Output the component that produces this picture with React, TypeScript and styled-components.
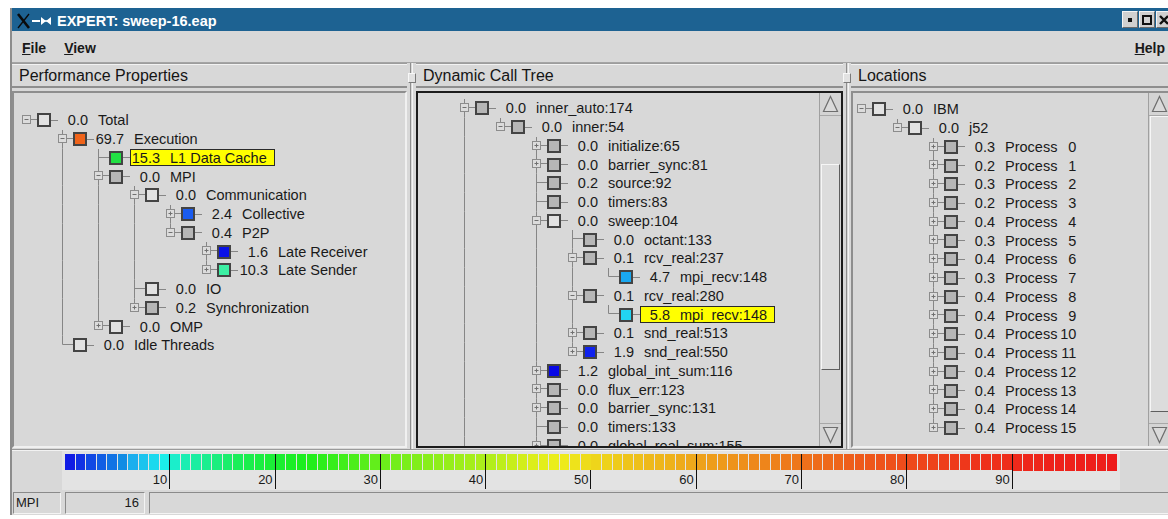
import React from 'react'
import styled, { createGlobalStyle } from 'styled-components'

const ROW = 18.75
const INDENT = 36
const LIGHT = '#e2e2e2'
const GRAY = '#b6b6b6'

const GlobalStyle = createGlobalStyle`
  html, body {
    margin: 0;
    padding: 0;
    background: #ffffff;
  }
  body {
    font-family: "Liberation Sans", Arial, sans-serif;
  }
`

const Page = styled.div`
  width: 1168px;
  height: 519px;
  overflow: hidden;
  box-sizing: border-box;
  padding: 8px 0 0 10px;
`

const Window = styled.div`
  width: 1160px;
  display: flex;
  flex-direction: column;
  background: #d8d8d8;
  border-left: 2px solid #8c8c8c;
  color: #1a1a1a;
`

const TitleBar = styled.div`
  height: 23px;
  display: flex;
  align-items: center;
  background: #1d6292;
  color: #ffffff;
  font-weight: bold;
  font-size: 14.5px;
  span {
    margin: 2px 0 0 3px;
    flex: 1;
  }
`

const WinButtons = styled.div`
  display: flex;
  gap: 1px;
`

const WinButton = styled.div`
  width: 16px;
  height: 17px;
  box-sizing: border-box;
  background: #d0d0d0;
  border: 1px solid;
  border-color: #f4f4f4 #6a6a6a #6a6a6a #f4f4f4;
  display: flex;
  align-items: center;
  justify-content: center;
`

const MenuBar = styled.div`
  height: 32px;
  display: flex;
  align-items: center;
  padding: 2px 7px 0 10px;
  box-sizing: border-box;
  font-size: 14px;
  font-weight: bold;
  border-bottom: 1px solid #a4a4a4;
  span {
    margin-right: 18px;
  }
  span:last-child {
    margin: 0 0 0 auto;
  }
`

const Panes = styled.div`
  height: 386px;
  display: flex;
`

const Pane = styled.div<{ $width?: number }>`
  display: flex;
  flex-direction: column;
  ${p => (p.$width ? `width: ${p.$width}px;` : 'flex: 1;')}
  min-width: 0;
`

const PaneHeader = styled.div`
  height: 25px;
  box-sizing: border-box;
  display: flex;
  align-items: center;
  padding: 2px 0 0 7px;
  font-size: 16px;
  color: #151515;
  border-top: 1px solid #9c9c9c;
  border-bottom: 2px solid #8e8e8e;
  box-shadow: inset 0 1px #f2f2f2;
`

const PaneBody = styled.div<{ $focus?: boolean }>`
  flex: 1;
  margin: 3px 0 1px;
  display: flex;
  min-height: 0;
  overflow: hidden;
  border: 2px solid;
  border-color: ${p =>
    p.$focus ? '#1c1c1c' : '#8e8e8e #f0f0f0 #f0f0f0 #8e8e8e'};
`

const Splitter = styled.div<{ $width: number }>`
  width: ${p => p.$width}px;
  display: flex;
  flex-direction: column;
  align-items: center;
  flex: none;
`

const SashLine = styled.div<{ $grow?: boolean }>`
  width: 1px;
  border-left: 1px solid #8e8e8e;
  border-right: 1px solid #f4f4f4;
  ${p => (p.$grow ? 'flex: 1;' : 'height: 10px;')}
`

const Sash = styled.div`
  width: 8px;
  height: 10px;
  box-sizing: border-box;
  background: #e2e2e2;
  border: 1px solid;
  border-color: #f8f8f8 #7a7a7a #7a7a7a #f8f8f8;
`

const TreeList = styled.div<{ $top: number }>`
  flex: 1;
  min-width: 0;
  overflow: hidden;
  padding-top: ${p => p.$top}px;
  font-size: 14.5px;
`

const Row = styled.div`
  height: ${ROW}px;
  display: flex;
  align-items: center;
  white-space: pre;
`

const Lines = styled.svg`
  flex: none;
  line {
    stroke: #868686;
    stroke-width: 1;
  }
  rect {
    fill: #dcdcdc;
    stroke: #8c8c8c;
    stroke-width: 1;
  }
  path {
    stroke: #707070;
    stroke-width: 1;
    fill: none;
  }
`

const Swatch = styled.span<{ $color: string }>`
  flex: none;
  width: 14px;
  height: 14px;
  box-sizing: border-box;
  border: 2px solid #444444;
  background: ${p => p.$color};
`

const Dash = styled.span`
  flex: none;
  width: 7px;
  height: 1px;
  background: #868686;
`

const Caption = styled.span<{ $mark?: boolean }>`
  display: flex;
  align-items: center;
  height: 17px;
  box-sizing: border-box;
  padding-right: 7px;
  border: 1px solid ${p => (p.$mark ? '#2a2a2a' : 'transparent')};
  background: ${p => (p.$mark ? '#ffff00' : 'transparent')};
`

const Value = styled.span`
  width: 29px;
  text-align: right;
`

const Label = styled.span`
  margin-left: 10px;
  display: flex;
`

const Num = styled.span`
  width: 19px;
  text-align: right;
`

const Scrollbar = styled.div`
  width: 21px;
  flex: none;
  display: flex;
  flex-direction: column;
  background: #d4d4d4;
  border-left: 1px solid #a0a0a0;
`

const Arrow = styled.div`
  height: 22px;
  display: flex;
  align-items: center;
  justify-content: center;
  polygon {
    fill: #dadada;
    stroke: #6e6e6e;
    stroke-width: 1.2;
  }
`

const Trough = styled.div`
  flex: 1;
  display: flex;
  flex-direction: column;
  border-top: 1px solid #a8a8a8;
  border-bottom: 1px solid #a8a8a8;
`

const Thumb = styled.div<{ $offset: number; $size: number }>`
  margin: ${p => p.$offset}px 1px 0 1px;
  height: ${p => p.$size}px;
  box-sizing: border-box;
  background: #dcdcdc;
  border: 1px solid;
  border-color: #f6f6f6 #5e5e5e #5e5e5e #f6f6f6;
`

const Separator = styled.div`
  height: 0;
  border-top: 1px solid #9a9a9a;
  border-bottom: 1px solid #f2f2f2;
`

const ScaleRow = styled.div`
  height: 39px;
  display: flex;
  align-items: stretch;
`

const Scale = styled.div`
  margin-left: 50px;
  width: 1058px;
  box-sizing: border-box;
  padding: 3px 2px 1px 3px;
  background: #e3e3e3;
  display: flex;
`

const Decade = styled.div<{ $tick: boolean }>`
  flex: 1;
  display: flex;
  flex-direction: column;
  border-right: 1px solid ${p => (p.$tick ? '#111111' : 'transparent')};
`

const Cells = styled.div`
  height: 17px;
  display: flex;
  gap: 1px;
`

const Cell = styled.span<{ $color: string }>`
  flex: 1;
  background: ${p => p.$color};
`

const TickLabel = styled.div`
  flex: 1;
  text-align: right;
  padding-right: 2px;
  font-size: 13px;
  line-height: 19px;
  color: #1a1a1a;
`

const StatusBar = styled.div`
  height: 25px;
  display: flex;
  align-items: center;
  gap: 4px;
  padding: 0 0 0 1px;
`

const Field = styled.div<{ $width?: number; $right?: boolean }>`
  ${p => (p.$width ? `width: ${p.$width}px;` : 'flex: 1;')}
  height: 22px;
  box-sizing: border-box;
  display: flex;
  align-items: center;
  justify-content: ${p => (p.$right ? 'flex-end' : 'flex-start')};
  padding: 0 5px 0 2px;
  font-size: 13px;
  border: 1px solid;
  border-color: #8a8a8a #f4f4f4 #f4f4f4 #8a8a8a;
`

type Node = {
  value: string
  label: string
  color: string
  exp?: 'open' | 'closed'
  mark?: boolean
  more?: boolean
  num?: string
  children?: Node[]
}

type TreeLine = {
  node: Node
  depth: number
  guides: boolean[]
  last: boolean
  root: boolean
}

const node = (
  value: string,
  label: string,
  color: string,
  exp?: 'open' | 'closed',
  children?: Node[]
): Node => ({ value, label, color, exp, children })

function flatten(
  nodes: Node[],
  depth: number,
  guides: boolean[],
  root: boolean,
  out: TreeLine[] = []
) {
  nodes.forEach((n, i) => {
    const last = i === nodes.length - 1 && !n.more
    out.push({ node: n, depth, guides, last, root })
    if (n.children) flatten(n.children, depth + 1, [...guides, !last], false, out)
  })
  return out
}

const properties: Node[] = [
  node('0.0', 'Total', LIGHT, 'open', [
    node('69.7', 'Execution', '#f0641a', 'open', [
      { value: '15.3', label: 'L1 Data Cache', color: '#22e044', mark: true },
      node('0.0', 'MPI', GRAY, 'open', [
        node('0.0', 'Communication', LIGHT, 'open', [
          node('2.4', 'Collective', '#1a5cf0', 'closed'),
          node('0.4', 'P2P', GRAY, 'open', [
            node('1.6', 'Late Receiver', '#0a12e6', 'closed'),
            node('10.3', 'Late Sender', '#3cf0a4', 'closed'),
          ]),
        ]),
        node('0.0', 'IO', LIGHT),
        node('0.2', 'Synchronization', GRAY, 'closed'),
      ]),
      node('0.0', 'OMP', LIGHT, 'closed'),
    ]),
    node('0.0', 'Idle Threads', LIGHT),
  ]),
]

const callTree: Node[] = [
  {
    ...node('0.0', 'inner_auto:174', GRAY, 'open', [
      node('0.0', 'inner:54', GRAY, 'open', [
        node('0.0', 'initialize:65', GRAY, 'closed'),
        node('0.0', 'barrier_sync:81', GRAY, 'closed'),
        node('0.2', 'source:92', GRAY),
        node('0.0', 'timers:83', GRAY),
        node('0.0', 'sweep:104', LIGHT, 'open', [
          node('0.0', 'octant:133', GRAY),
          node('0.1', 'rcv_real:237', GRAY, 'open', [
            node('4.7', 'mpi_recv:148', '#1aa8f0'),
          ]),
          node('0.1', 'rcv_real:280', GRAY, 'open', [
            { value: '5.8', label: 'mpi_recv:148', color: '#22d4f2', mark: true },
          ]),
          node('0.1', 'snd_real:513', GRAY, 'closed'),
          node('1.9', 'snd_real:550', '#1022ee', 'closed'),
        ]),
        node('1.2', 'global_int_sum:116', '#0808e6', 'closed'),
        node('0.0', 'flux_err:123', GRAY, 'closed'),
        node('0.0', 'barrier_sync:131', GRAY, 'closed'),
        node('0.0', 'timers:133', GRAY),
        { ...node('0.0', 'global_real_sum:155', GRAY, 'closed'), more: true },
      ]),
    ]),
    more: true,
  },
]

const loads = ['0.3', '0.2', '0.3', '0.2', '0.4', '0.3', '0.4', '0.3', '0.4', '0.4', '0.4', '0.4', '0.4', '0.4', '0.4', '0.4']

const locations: Node[] = [
  node('0.0', 'IBM', LIGHT, 'open', [
    node(
      '0.0',
      'j52',
      LIGHT,
      'open',
      loads.map((v, i) => ({ value: v, label: 'Process', num: String(i), color: GRAY, exp: 'closed' as const }))
    ),
  ]),
]

const Connector: React.FC<{ line: TreeLine; x0: number }> = ({ line, x0 }) => {
  const col = (d: number) => Math.floor(x0 + INDENT * d) + 0.5
  const cx = col(line.depth)
  const width = cx + 10.5
  const cy = Math.round(ROW / 2) - 0.5
  return (
    <Lines width={width} height={ROW}>
      {line.guides.map((g, a) =>
        g ? <line key={a} x1={col(a)} x2={col(a)} y1={0} y2={ROW} /> : null
      )}
      {!line.root && <line x1={cx} x2={cx} y1={0} y2={line.last ? cy : ROW} />}
      <line x1={cx} x2={width} y1={cy} y2={cy} />
      {line.node.exp && (
        <>
          <rect x={cx - 4} y={cy - 4} width={8} height={8} />
          <path d={`M${cx - 2} ${cy}H${cx + 2}`} />
          {line.node.exp === 'closed' && <path d={`M${cx} ${cy - 2}V${cy + 2}`} />}
        </>
      )}
    </Lines>
  )
}

const Tree: React.FC<{ lines: TreeLine[]; x0: number; top: number }> = ({ lines, x0, top }) => (
  <TreeList $top={top}>
    {lines.map((line, i) => (
      <Row key={i}>
        <Connector line={line} x0={x0} />
        <Swatch $color={line.node.color} />
        <Dash />
        <Caption $mark={line.node.mark}>
          <Value>{line.node.value}</Value>
          <Label>
            {line.node.label}
            {line.node.num !== undefined && <Num>{line.node.num}</Num>}
          </Label>
        </Caption>
      </Row>
    ))}
  </TreeList>
)

const ScrollBar: React.FC<{ offset: number; size: number }> = ({ offset, size }) => (
  <Scrollbar>
    <Arrow>
      <svg width="17" height="18">
        <polygon points="8.5,1.5 15.5,16.5 1.5,16.5" />
      </svg>
    </Arrow>
    <Trough>
      <Thumb $offset={offset} $size={size} />
    </Trough>
    <Arrow>
      <svg width="17" height="18">
        <polygon points="1.5,1.5 15.5,1.5 8.5,16.5" />
      </svg>
    </Arrow>
  </Scrollbar>
)

const Divider: React.FC<{ width: number }> = ({ width }) => (
  <Splitter $width={width}>
    <SashLine />
    <Sash />
    <SashLine $grow />
  </Splitter>
)

// hue falls from blue (0%) to red (100%), fastest through cyan and green
const hueStops: [number, number][] = [
  [0, 240], [4, 215], [7, 195], [9, 183], [11, 165], [14, 150], [17, 135],
  [20, 127], [25, 114], [30, 98], [35, 88], [40, 78], [45, 64], [50, 54],
  [55, 46], [60, 39], [65, 32], [70, 25], [78, 15], [85, 8], [92, 3], [100, 0],
]

const heat = (v: number) => {
  let h = 0
  for (let i = 1; i < hueStops.length; i++) {
    const [a, ha] = hueStops[i - 1]
    const [b, hb] = hueStops[i]
    if (v <= b) {
      h = ha + ((v - a) / (b - a)) * (hb - ha)
      break
    }
  }
  const light = h > 200 ? 48 : 52
  return `hsl(${h.toFixed(0)}, 86%, ${light}%)`
}

const ColourScale = () => (
  <ScaleRow>
    <Scale>
      {Array.from({ length: 10 }, (_, d) => (
        <Decade key={d} $tick={d < 9}>
          <Cells>
            {Array.from({ length: 10 }, (_, c) => (
              <Cell key={c} $color={heat(d * 10 + c + 0.5)} />
            ))}
          </Cells>
          <TickLabel>{d < 9 ? (d + 1) * 10 : ''}</TickLabel>
        </Decade>
      ))}
    </Scale>
  </ScaleRow>
)

const TitleIcon = () => (
  <svg width="38" height="18" style={{ marginLeft: 4, marginTop: 2 }}>
    <line x1="2" y1="2" x2="13" y2="16" stroke="#0a0a0a" strokeWidth="2.6" />
    <line x1="13" y1="2" x2="2" y2="16" stroke="#0a0a0a" strokeWidth="1.3" />
    <line x1="16" y1="9" x2="24" y2="9" stroke="#ffffff" strokeWidth="2" />
    <line x1="25" y1="9" x2="35" y2="9" stroke="#ffffff" strokeWidth="1.5" />
    <polygon points="25,5 25,13 30,9" fill="#ffffff" />
    <polygon points="35,5 35,13 30,9" fill="#ffffff" />
  </svg>
)

export default function App() {
  const perfLines = flatten(properties, 0, [], true)
  const callLines = flatten(callTree, 1, [false], false)
  const locLines = flatten(locations, 0, [], true)

  return (
    <Page>
      <GlobalStyle />
      <Window>
        <TitleBar>
          <TitleIcon />
          <span>EXPERT: sweep-16.eap</span>
          <WinButtons>
            <WinButton>
              <svg width="6" height="6">
                <rect x="1" y="1" width="4" height="4" fill="#111" />
              </svg>
            </WinButton>
            <WinButton>
              <svg width="10" height="10">
                <rect x="1" y="1" width="8" height="8" fill="none" stroke="#111" strokeWidth="2" />
              </svg>
            </WinButton>
            <WinButton>
              <svg width="10" height="10">
                <path d="M1 1L9 9M9 1L1 9" stroke="#111" strokeWidth="2.4" />
              </svg>
            </WinButton>
          </WinButtons>
        </TitleBar>
        <MenuBar>
          <span>
            <u>F</u>ile
          </span>
          <span>
            <u>V</u>iew
          </span>
          <span>
            <u>H</u>elp
          </span>
        </MenuBar>
        <Panes>
          <Pane $width={395}>
            <PaneHeader>Performance Properties</PaneHeader>
            <PaneBody>
              <Tree lines={perfLines} x0={12} top={18} />
            </PaneBody>
          </Pane>
          <Divider width={9} />
          <Pane $width={427}>
            <PaneHeader>Dynamic Call Tree</PaneHeader>
            <PaneBody $focus>
              <Tree lines={callLines} x0={10} top={6} />
              <ScrollBar offset={48} size={206} />
            </PaneBody>
          </Pane>
          <Divider width={8} />
          <Pane>
            <PaneHeader>Locations</PaneHeader>
            <PaneBody>
              <Tree lines={locLines} x0={8} top={7} />
              <ScrollBar offset={0} size={296} />
            </PaneBody>
          </Pane>
        </Panes>
        <Separator />
        <ColourScale />
        <StatusBar>
          <Field $width={48}>MPI</Field>
          <Field $width={80} $right>
            16
          </Field>
          <Field />
        </StatusBar>
      </Window>
    </Page>
  )
}
